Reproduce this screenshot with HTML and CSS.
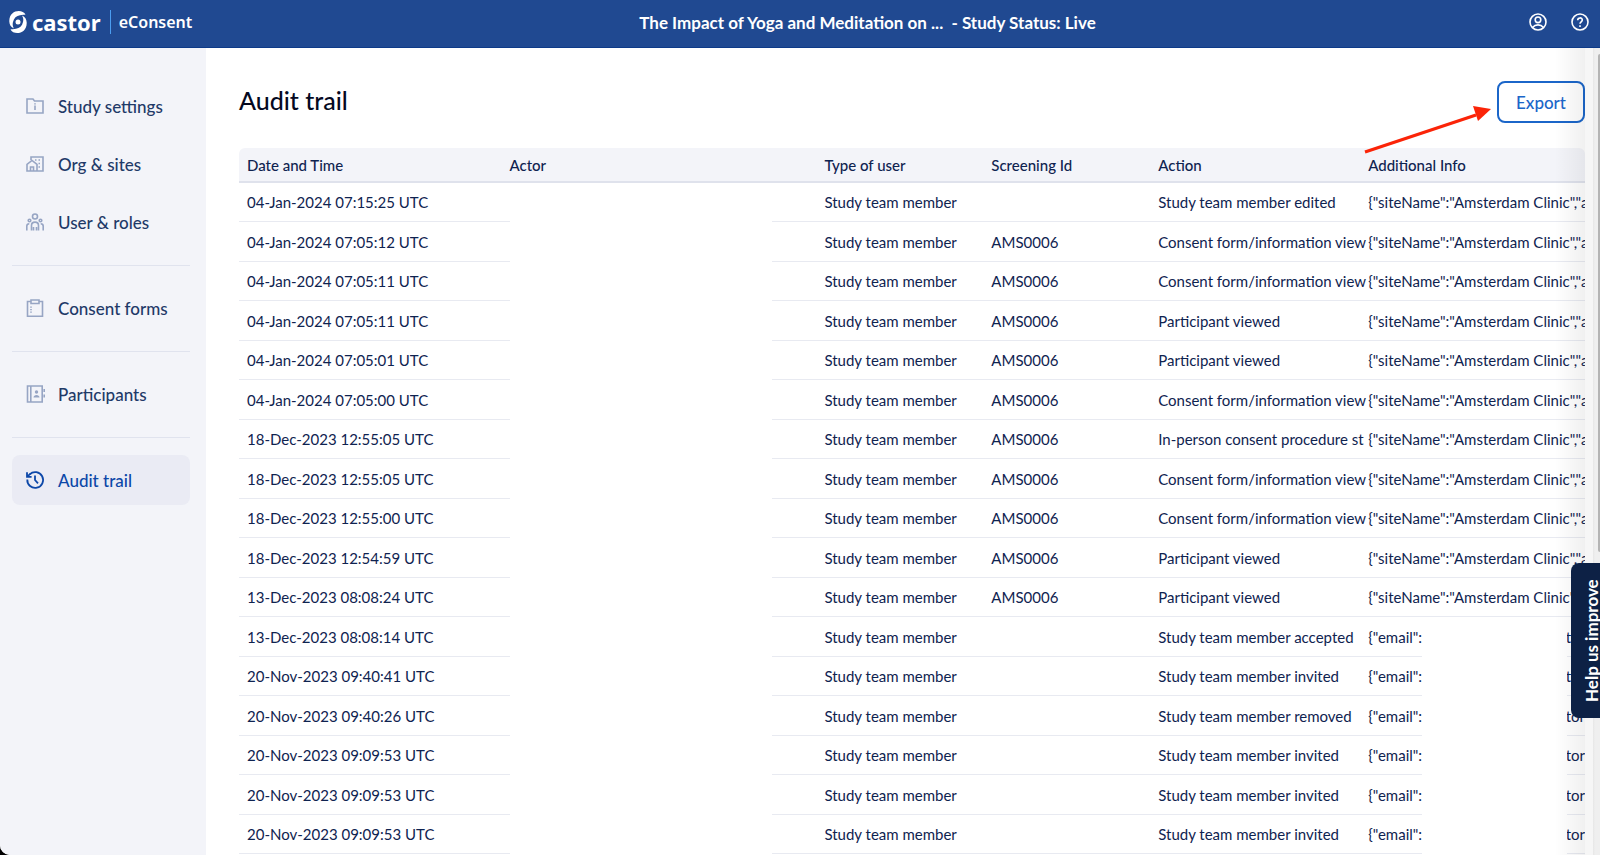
FILE: index.html
```html
<!DOCTYPE html>
<html lang="en">

<head>
    <meta charset="UTF-8">
    <meta name="viewport" content="width=device-width, initial-scale=1.0">
    <title>Castor eConsent - Audit trail</title>
    <link rel="stylesheet" href="styles.css">
</head>

<body>
    <div class="app">
        <header class="topbar">
            <a class="brand" href="#">
                <svg class="brand-logo" viewBox="0 0 18 26" aria-hidden="true">
                    <path d="M16.500 5.500C13.500-.5 0 .5 .3 12.500c.2 3.500 1.500 5.500 4.700 7C3.500 17 3.500 15 4 13c.8-4 3.500-6.200 7-6.800 2.500-.4 4-.4 5.500-.7z" fill="#fff" />
                    <path d="M16.500 5.500C13.500-.5 0 .5 .3 12.500c.2 3.500 1.500 5.500 4.700 7C3.500 17 3.500 15 4 13c.8-4 3.500-6.200 7-6.800 2.500-.4 4-.4 5.500-.7z" fill="#fff" transform="rotate(180 9 13)" />
                    <circle cx="9" cy="13" r="2.500" fill="#fff" />
                </svg>
                <span class="brand-name">castor</span>
                <span class="brand-product">eConsent</span>
            </a>
            <div class="study-title">The Impact of Yoga and Meditation on ... &nbsp;- Study Status: Live</div>
            <div class="topbar-actions">
                <button class="icon-button" aria-label="Account">
                    <svg viewBox="0 0 18 18" fill="none" stroke="#fff" stroke-width="1.600">
                        <circle cx="9" cy="9" r="8" />
                        <circle cx="9" cy="6.800" r="2.800" />
                        <path d="M3.500 14.500c1.500-1.800 3.300-2.600 5.500-2.600s4 .8 5.500 2.600" />
                    </svg>
                </button>
                <button class="icon-button" aria-label="Help">
                    <svg viewBox="0 0 18 18" fill="none" stroke="#fff" stroke-width="1.600">
                        <circle cx="9" cy="9" r="8" />
                        <path d="M6.700 7.200c0-3 4.600-3 4.600-.2 0 1.800-2.300 1.900-2.300 3.800" />
                        <path d="M9 12.200v1.700" />
                    </svg>
                </button>
            </div>
        </header>

        <div class="layout">
            <nav class="sidebar">
                <a class="nav-item" href="#">
                    <svg viewBox="0 0 18 18">
                        <path d="M1 2h6l1.500 2H17v12H1z" />
                        <path d="M9 8.500V13M9 6.200v1.300" />
                    </svg>
                    Study settings
                </a>
                <a class="nav-item" href="#">
                    <svg viewBox="0 0 18 18">
                        <path d="M5 5V2h12v14H1V9.500l5-4 5 4V16M4.500 16v-4h3v4" />
                        <path d="M9 5h1.500M12.500 5H14M12.500 8.500H14M12.500 12H14" />
                    </svg>
                    Org &amp; sites
                </a>
                <a class="nav-item" href="#">
                    <svg viewBox="0 0 18 18">
                        <circle cx="9" cy="3.500" r="2.500" />
                        <circle cx="3.500" cy="7.500" r="1.300" />
                        <circle cx="14.500" cy="7.500" r="1.300" />
                        <path d="M5.500 17.500v-5c0-4.500 7-4.500 7 0v5M7.500 17.500V14M10.500 17.500V14M.8 17.500V13c0-1.500 1-2.300 2.500-2.300M17.200 17.500V13c0-1.500-1-2.300-2.500-2.300" />
                    </svg>
                    User &amp; roles
                </a>
                <hr class="nav-divider">
                <a class="nav-item" href="#">
                    <svg viewBox="0 0 18 18">
                        <path d="M5 2.500H1.500v14.700h15V2.500H13M5 1h8v3.500H5z" />
                        <path d="M5 7.500v1.300M5 10v1.300M5 12.500v1.300" />
                    </svg>
                    Consent forms
                </a>
                <hr class="nav-divider">
                <a class="nav-item" href="#">
                    <svg viewBox="0 0 18 18">
                        <path d="M1.500 1h14.700v16H1.500zM4.800 1v16" />
                        <circle class="solid" cx="10.500" cy="7" r="1.700" />
                        <path class="solid" d="M7.500 12.500c0-3.500 6-3.500 6 0z" />
                        <path d="M18.200 4v3M18.200 9.500v3" />
                    </svg>
                    Participants
                </a>
                <hr class="nav-divider">
                <a class="nav-item active" href="#">
                    <svg viewBox="0 0 18 18">
                        <path d="M1.300 8.500a7.900 7.900 0 1 0 2.400-5.200" />
                        <path d="M1 1.200v4.600h4.600M1.500 5.300l2.700-2.500M9 4.500V9l3 3.300" />
                    </svg>
                    Audit trail
                </a>
            </nav>

            <main class="content">
                <div class="page-head">
                    <h1 class="page-title">Audit trail</h1>
                    <button class="export-button">Export</button>
                    <svg class="arrow" viewBox="0 0 130 48" aria-hidden="true">
                        <path d="M1 46L112 9" stroke="#fb2408" stroke-width="3" />
                        <path d="M109 0l18 3L114 15z" fill="#fb2408" />
                    </svg>
                </div>

                <table class="audit-table">
                    <thead>
                        <tr>
                            <th class="col-date">Date and Time</th>
                            <th class="col-actor">Actor</th>
                            <th class="col-type">Type of user</th>
                            <th class="col-screening">Screening Id</th>
                            <th class="col-action">Action</th>
                            <th class="col-info">Additional Info</th>
                        </tr>
                    </thead>
                    <tbody id="auditRows"></tbody>
                </table>
            </main>
            <div class="edge-shadow"></div>
            <div class="scroll-track">
                <div class="scroll-thumb"></div>
            </div>
        </div>

        <button class="feedback-tab">Help us improve</button>
    </div>

    <script>
        const site = '{"siteName":"Amsterdam Clinic","a';
        const consent = 'Consent form/information view';
        const rows = [
            ['04-Jan-2024 07:15:25 UTC', '', 'Study team member edited', site],
            ['04-Jan-2024 07:05:12 UTC', 'AMS0006', consent, site],
            ['04-Jan-2024 07:05:11 UTC', 'AMS0006', consent, site],
            ['04-Jan-2024 07:05:11 UTC', 'AMS0006', 'Participant viewed', site],
            ['04-Jan-2024 07:05:01 UTC', 'AMS0006', 'Participant viewed', site],
            ['04-Jan-2024 07:05:00 UTC', 'AMS0006', consent, site],
            ['18-Dec-2023 12:55:05 UTC', 'AMS0006', 'In-person consent procedure st', site],
            ['18-Dec-2023 12:55:05 UTC', 'AMS0006', consent, site],
            ['18-Dec-2023 12:55:00 UTC', 'AMS0006', consent, site],
            ['18-Dec-2023 12:54:59 UTC', 'AMS0006', 'Participant viewed', site],
            ['13-Dec-2023 08:08:24 UTC', 'AMS0006', 'Participant viewed', site],
            ['13-Dec-2023 08:08:14 UTC', '', 'Study team member accepted', ''],
            ['20-Nov-2023 09:40:41 UTC', '', 'Study team member invited', ''],
            ['20-Nov-2023 09:40:26 UTC', '', 'Study team member removed', ''],
            ['20-Nov-2023 09:09:53 UTC', '', 'Study team member invited', ''],
            ['20-Nov-2023 09:09:53 UTC', '', 'Study team member invited', ''],
            ['20-Nov-2023 09:09:53 UTC', '', 'Study team member invited', '']
        ];
        // rows without site info hold an e-mail address, which stays hidden
        const email = '<div class="email"><span>{"email":</span><span>tor</span></div><span class="mask"></span>';

        document.getElementById('auditRows').innerHTML = rows.map(([date, screening, action, info]) => `
            <tr>
                <td>${date}</td>
                <td class="actor"><span class="mask"></span></td>
                <td>Study team member</td>
                <td>${screening}</td>
                <td>${action}</td>
                <td class="info"><div class="clip">${info || email}</div></td>
            </tr>`).join('');
    </script>
</body>

</html>
```
FILE: styles.css
```css
* {
    box-sizing: border-box;
}

body {
    margin: 0;
    background-color: #000;
    color: #0f2350;
    font-family: Lato, "Open Sans", sans-serif;
    font-size: 15px;
}

button {
    font-family: inherit;
    cursor: pointer;
}

.app {
    position: relative;
    display: flex;
    flex-direction: column;
    height: 100vh;
    overflow: hidden;
    background-color: #fff;
    border-bottom-left-radius: 10px;
}

/* Top bar */
.topbar {
    display: flex;
    align-items: center;
    flex: none;
    height: 48px;
    padding: 0 11px 3px 0;
    background-color: #204991;
    border-bottom: 1px solid #0d3a88;
    color: #fff;
}

.brand {
    display: flex;
    align-items: center;
    width: 206px;
    padding-left: 9px;
    color: #fff;
    font-family: "Noto Sans", "Open Sans", sans-serif;
    text-decoration: none;
}

.brand-logo {
    width: 18px;
    height: 26px;
    margin-right: 5px;
}

.brand-name {
    font-size: 22px;
    font-weight: 700;
    line-height: 24px;
}

.brand-product {
    margin-left: 9px;
    padding-left: 8px;
    border-left: 1px solid #4b9df0;
    font-size: 16px;
    font-weight: 600;
    line-height: 24px;
}

.study-title {
    flex: 1;
    font-size: 17px;
    font-weight: 700;
    text-align: center;
}

.topbar-actions {
    display: flex;
    gap: 24px;
}

.icon-button {
    width: 18px;
    height: 18px;
    padding: 0;
    border: none;
    background: none;
}

.icon-button svg {
    display: block;
}

/* Layout */
.layout {
    position: relative;
    display: flex;
    flex: 1;
    min-height: 0;
}

.sidebar {
    flex: none;
    width: 206px;
    padding: 33px 16px 0 12px;
    background-color: #f3f4f9;
}

.nav-item {
    display: flex;
    align-items: center;
    gap: 14px;
    height: 50px;
    margin-bottom: 8px;
    padding-left: 14px;
    border-radius: 8px;
    color: #1f3a68;
    font-size: 17px;
    font-weight: 500;
    text-decoration: none;
}

.nav-item svg {
    width: 18px;
    height: 18px;
    overflow: visible;
    fill: none;
    stroke: #97a5c4;
    stroke-width: 1.6;
}

.nav-item .solid {
    fill: #97a5c4;
    stroke: none;
}

.nav-item.active {
    background-color: #eaebf4;
    color: #0c47a8;
}

.nav-item.active svg {
    stroke: #0c47a8;
    stroke-width: 1.8;
}

.nav-divider {
    height: 1px;
    margin: 18px 0 17px;
    border: none;
    background-color: #e0e3ee;
}

.content {
    flex: 1;
    min-width: 0;
    padding: 33px 15px 0 33px;
    overflow: hidden;
}

.page-head {
    position: relative;
    display: flex;
    justify-content: space-between;
    align-items: flex-start;
    height: 67px;
}

.page-title {
    margin: 0;
    color: #05091f;
    font-size: 25px;
    font-weight: 500;
    line-height: 38px;
}

.export-button {
    height: 42px;
    padding: 0 17px;
    border: 2px solid #1b66c9;
    border-radius: 8px;
    background-color: #fff;
    color: #1b66c9;
    font-size: 17px;
    font-weight: 500;
}

.arrow {
    position: absolute;
    top: 25px;
    right: 91px;
    width: 130px;
    height: 48px;
}

/* Audit table */
.audit-table {
    width: 100%;
    border-spacing: 0;
    table-layout: fixed;
}

.audit-table th {
    height: 35px;
    padding: 0 0 0 8px;
    background-color: #f3f4f9;
    border-bottom: 2px solid #dfe2ec;
    font-size: 15px;
    font-weight: 500;
    text-align: left;
}

.audit-table th:first-child {
    border-top-left-radius: 6px;
}

.audit-table th:last-child {
    border-top-right-radius: 6px;
}

.audit-table td {
    position: relative;
    height: 40px;
    padding: 0 0 0 8px;
    border-bottom: 1px solid #e8eaf1;
    white-space: nowrap;
}

.audit-table tr:nth-child(odd) td {
    height: 39px;
}

.col-date {
    width: 19.5%;
}

.col-actor {
    width: 23.4%;
}

.col-type,
.col-screening {
    width: 12.4%;
}

.col-action {
    width: 15.6%;
}

.clip {
    overflow: hidden;
}

.email {
    display: flex;
    justify-content: space-between;
}

.mask {
    position: absolute;
    top: 0;
    bottom: -1px;
    background-color: #fff;
}

.actor .mask {
    left: 9px;
    right: 44px;
}

.info .mask {
    left: 62px;
    right: 18px;
}

/* Right edge of the window */
.edge-shadow {
    position: absolute;
    top: 0;
    right: 15px;
    bottom: 0;
    width: 30px;
    background: linear-gradient(to right, rgba(0, 0, 0, 0), rgba(0, 0, 0, 0.06));
    pointer-events: none;
}

.scroll-track {
    position: absolute;
    top: 0;
    right: 0;
    bottom: 0;
    width: 15px;
    background: linear-gradient(to right, #f6f6f6 8px, #e6e6e6 8px, #efefef 10px);
}

.scroll-thumb {
    width: 2px;
    height: 498px;
    margin: 6px 0 0 auto;
    border-radius: 2px 0 0 2px;
    background-color: #b4b4b4;
}

.feedback-tab {
    position: absolute;
    top: 563px;
    right: 0;
    width: 29px;
    height: 155px;
    padding: 0 13px 0 0;
    border: none;
    border-radius: 0 8px 8px 0;
    background-color: #0d2145;
    color: #fff;
    font-size: 17px;
    font-weight: 700;
    line-height: 16px;
    writing-mode: vertical-rl;
    transform: rotate(180deg);
}
```
